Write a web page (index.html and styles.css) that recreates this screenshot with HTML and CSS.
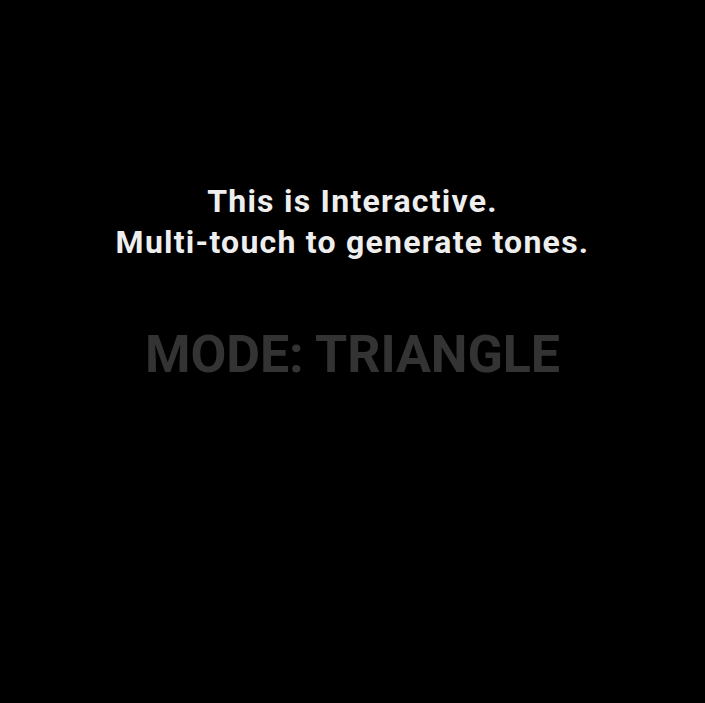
FILE: index.html
```html
<!DOCTYPE html>
<html>
<head>
<meta charset="utf-8">
<link rel="stylesheet" href="styles.css">
</head>
<body>
<main class="stage">
  <p class="intro">This is Interactive.<br>Multi-touch to generate tones.</p>
  <p class="mode">MODE: TRIANGLE</p>
</main>
</body>
</html>
```
FILE: styles.css
```css
html, body {
  margin: 0;
  padding: 0;
  background: #000;
  height: 100%;
}
.stage {
  height: 100%;
  display: flex;
  flex-direction: column;
  align-items: center;
  padding-top: 181px;
  box-sizing: border-box;
  font-family: Roboto, "Liberation Sans", sans-serif;
  font-weight: 700;
  text-align: center;
}
.intro {
  margin: 0;
  color: #eeeeee;
  font-size: 32px;
  line-height: 41px;
  letter-spacing: 1.25px;
}
.mode {
  margin: 62px 0 0;
  color: #333333;
  font-size: 52px;
  line-height: 60px;
  letter-spacing: -0.1px;
}
```
